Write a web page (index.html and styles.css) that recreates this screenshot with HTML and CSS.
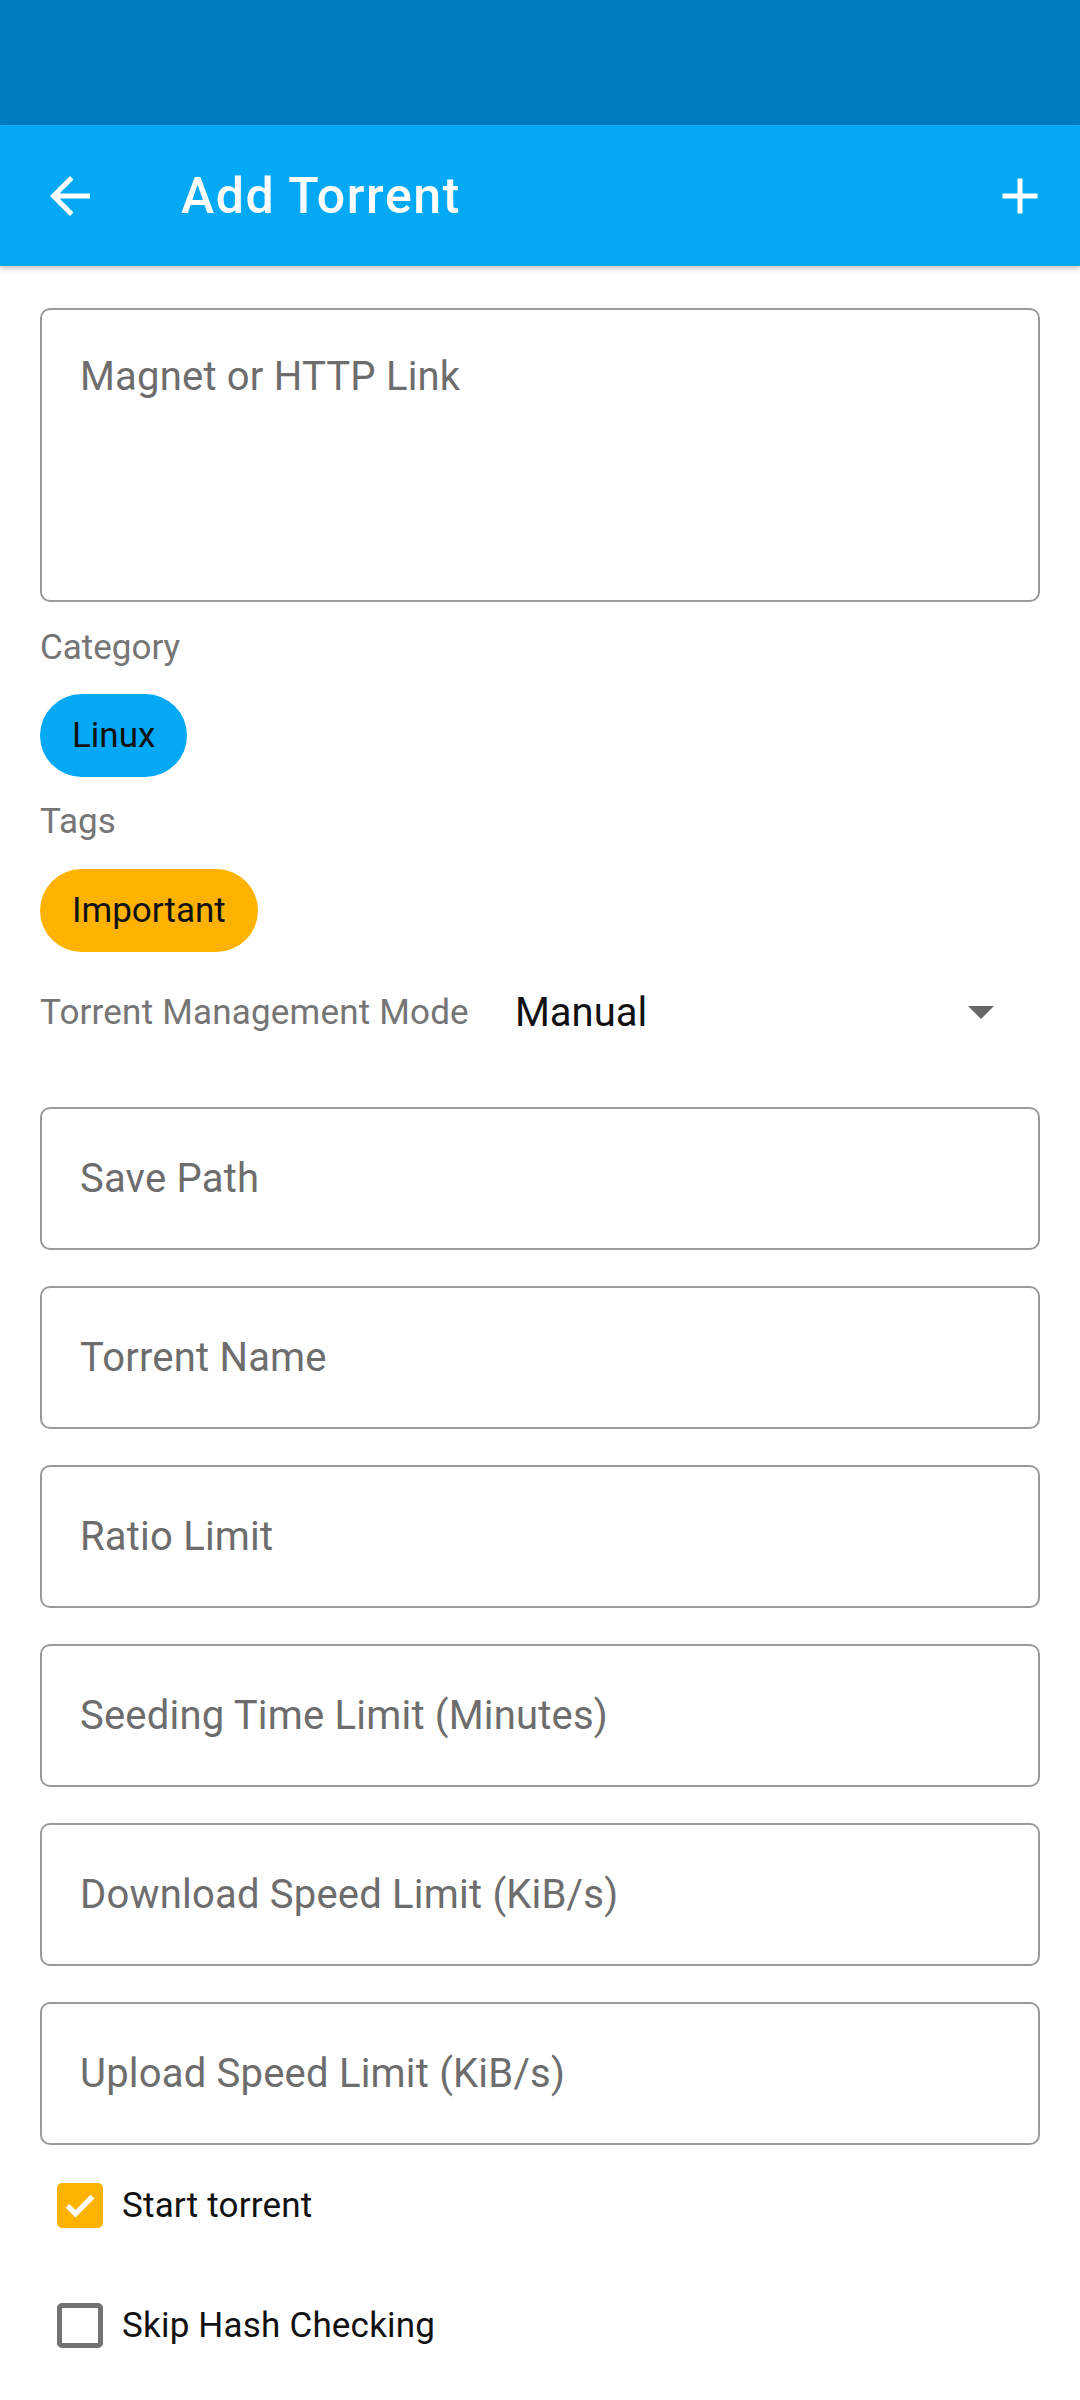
FILE: index.html
```html
<!DOCTYPE html>
<html>
<head>
<meta charset="utf-8">
<link rel="stylesheet" href="styles.css">
</head>
<body>
<div class="status-bar"></div>
<header class="app-bar">
  <span class="icon-btn back">
    <svg viewBox="0 0 24 24" width="60" height="60"><path fill="#fff" d="M20 11H7.83l5.59-5.59L12 4l-8 8 8 8 1.41-1.41L7.83 13H20v-2z"/></svg>
  </span>
  <h1 class="title">Add Torrent</h1>
  <span class="icon-btn add">
    <svg viewBox="0 0 24 24" width="60" height="60"><path fill="#fff" d="M19 13h-6v6h-2v-6H5v-2h6V5h2v6h6v2z"/></svg>
  </span>
</header>
<main class="content">
  <div class="field field-multi"><span class="hint">Magnet or HTTP Link</span></div>
  <div class="label label-cat">Category</div>
  <div class="chip chip-blue">Linux</div>
  <div class="label label-tags">Tags</div>
  <div class="chip chip-amber">Important</div>
  <div class="mode-row">
    <span class="mode-label">Torrent Management Mode</span>
    <span class="mode-value">Manual</span>
    <span class="dropdown-arrow"></span>
  </div>
  <div class="field field-first"><span class="hint">Save Path</span></div>
  <div class="field"><span class="hint">Torrent Name</span></div>
  <div class="field"><span class="hint">Ratio Limit</span></div>
  <div class="field"><span class="hint">Seeding Time Limit (Minutes)</span></div>
  <div class="field"><span class="hint">Download Speed Limit (KiB/s)</span></div>
  <div class="field"><span class="hint">Upload Speed Limit (KiB/s)</span></div>
  <div class="check-row">
    <span class="checkbox checked">
      <svg viewBox="0 0 24 24" width="40" height="40"><path fill="none" stroke="#fff" stroke-width="3.2" d="M4.5 12.5l4.8 4.8L19.5 7"/></svg>
    </span>
    <span class="check-text">Start torrent</span>
  </div>
  <div class="check-row">
    <span class="checkbox"></span>
    <span class="check-text">Skip Hash Checking</span>
  </div>
</main>
</body>
</html>
```
FILE: styles.css
```css
* { box-sizing: border-box; }
html, body {
  margin: 0;
  padding: 0;
  background: #ffffff;
  font-family: Roboto, "Noto Sans", sans-serif;
}
body { width: 1080px; height: 2400px; overflow: hidden; }

.status-bar {
  height: 125px;
  background: #017cc2;
}
.app-bar {
  position: relative;
  height: 141px;
  background: #03a9f4;
  display: flex;
  align-items: center;
  padding: 0 30px 0 40px;
  box-shadow: 0 3px 6px rgba(0,0,0,0.16), 0 2px 3px rgba(0,0,0,0.08);
  z-index: 2;
}
.icon-btn { width: 60px; height: 60px; display: flex; }
.title {
  margin: 0 0 0 81px;
  flex: 1;
  color: #ffffff;
  font-size: 50px;
  font-weight: 500;
  letter-spacing: 1.6px;
}

.content {
  padding: 42px 40px 0;
}

.field {
  height: 143px;
  border: 2.5px solid #9a9a9a;
  border-radius: 10px;
  display: flex;
  align-items: center;
  padding-left: 38px;
  margin-top: 36px;
}
.field-first { margin-top: 55px; }
.field-multi {
  margin-top: 0;
  height: 294px;
  align-items: flex-start;
  padding-top: 43px;
}
.hint {
  font-size: 40px;
  line-height: 48px;
  color: #6d6d6d;
  letter-spacing: 0.2px;
}

.label {
  font-size: 35px;
  line-height: 42px;
  height: 42px;
  color: #757575;
}
.label-cat { margin-top: 25px; }
.label-tags { margin-top: 24px; }

.chip {
  display: inline-flex;
  align-items: center;
  height: 83px;
  padding: 0 32px;
  border-radius: 42px;
  font-size: 35px;
  color: #111111;
  margin-top: 25px;
}
.chip-blue { background: #03a9f4; }
.chip-amber { background: #ffb300; margin-top: 26px; }
.content > .chip { display: flex; width: max-content; }

.mode-row {
  margin-top: 20px;
  height: 80px;
  display: flex;
  align-items: center;
}
.mode-label {
  font-size: 35px;
  color: #757575;
  letter-spacing: 0.2px;
}
.mode-value {
  margin-left: 46px;
  font-size: 40px;
  color: #111111;
  flex: 1;
}
.dropdown-arrow {
  width: 0;
  height: 0;
  border-left: 13px solid transparent;
  border-right: 13px solid transparent;
  border-top: 13px solid #666666;
  margin-right: 46px;
}

.check-row {
  height: 120px;
  display: flex;
  align-items: center;
  padding-left: 17px;
}
.checkbox {
  width: 46px;
  height: 45px;
  border: 5px solid #737373;
  border-radius: 5px;
  display: flex;
  align-items: center;
  justify-content: center;
}
.checkbox.checked {
  border: none;
  background: #ffb300;
}
.check-text {
  margin-left: 19px;
  font-size: 35px;
  color: #111111;
  letter-spacing: 0.2px;
}
```
